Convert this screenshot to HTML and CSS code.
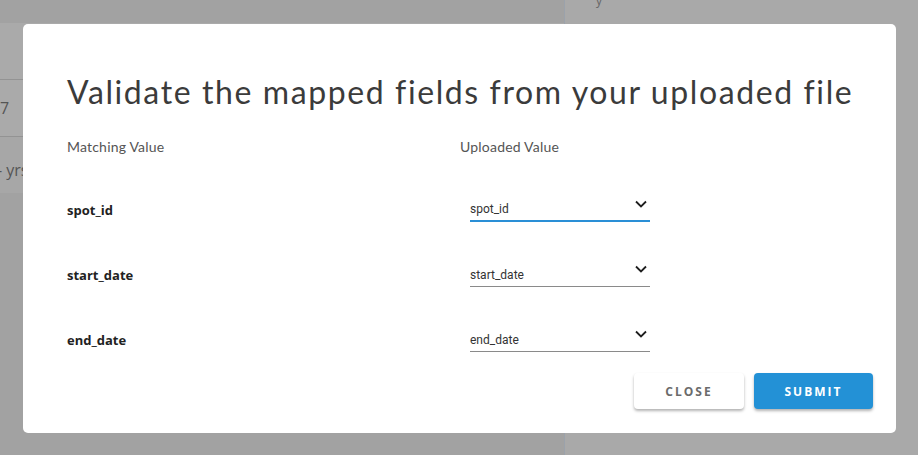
FILE: index.html
```html
<!DOCTYPE html>
<html lang="en">
<head>
    <meta charset="UTF-8">
    <meta name="viewport" content="width=device-width, initial-scale=1.0">
    <title>Field Mapping</title>
    <link rel="stylesheet" href="styles.css">
</head>
<body>
    <div class="page">
        <div class="main-panel">
            <div class="table-card">
                <div class="table-row head"></div>
                <div class="table-row"><span class="cell">7</span></div>
                <div class="table-row last"><span class="cell">- yrs</span></div>
            </div>
        </div>
        <div class="side-panel">
            <span class="side-text">y</span>
        </div>
    </div>

    <div class="overlay">
        <div class="modal">
            <h1>Validate the mapped fields from your uploaded file</h1>
            <div class="map-grid">
                <div class="col-label">Matching Value</div>
                <div class="col-label">Uploaded Value</div>

                <div class="field-name">spot_id</div>
                <div class="select active">
                    <span>spot_id</span>
                    <svg class="chevron" viewBox="0 0 12 8" width="12" height="8"><path d="M1 1.5 6 6.5 11 1.5" fill="none" stroke="#1e1e1e" stroke-width="1.8"/></svg>
                </div>

                <div class="field-name">start_date</div>
                <div class="select">
                    <span>start_date</span>
                    <svg class="chevron" viewBox="0 0 12 8" width="12" height="8"><path d="M1 1.5 6 6.5 11 1.5" fill="none" stroke="#1e1e1e" stroke-width="1.8"/></svg>
                </div>

                <div class="field-name">end_date</div>
                <div class="select">
                    <span>end_date</span>
                    <svg class="chevron" viewBox="0 0 12 8" width="12" height="8"><path d="M1 1.5 6 6.5 11 1.5" fill="none" stroke="#1e1e1e" stroke-width="1.8"/></svg>
                </div>
            </div>
            <div class="actions">
                <button class="btn btn-close">Close</button>
                <button class="btn btn-submit">Submit</button>
            </div>
        </div>
    </div>
</body>
</html>
```

FILE: styles.css
```css
* {
    box-sizing: border-box;
}

body {
    margin: 0;
    font-family: "Open Sans", Arial, sans-serif;
    background-color: #a3a3a3;
    height: 455px;
    overflow: hidden;
}

.page {
    display: flex;
    height: 100%;
}

.main-panel {
    width: 564px;
    padding-top: 23px;
    background-color: #a2a2a2;
}

.table-card {
    background-color: #aaaaaa;
}

.table-row {
    height: 57px;
    border-bottom: 1px solid #939393;
    color: #555;
    font-size: 16px;
    display: flex;
    align-items: center;
}

.table-row.last {
    border-bottom: none;
    height: 56px;
    padding-top: 10px;
    background-color: #a7a7a7;
}

.table-row.last .cell {
    margin-left: -3px;
}

.side-panel {
    flex: 1;
    background-color: #a9a9a9;
    border-left: 1px solid #9ba2ab;
    padding-left: 31px;
}

.side-text {
    color: #666;
    font-size: 12px;
    position: relative;
    top: -12px;
}

.overlay {
    position: absolute;
    inset: 0;
    padding: 24px 22px 22px 23px;
}

.modal {
    background-color: #fff;
    border-radius: 5px;
    height: 409px;
    padding: 46px 44px 24px 44px;
}

.modal h1 {
    margin: 0;
    font-family: Lato, sans-serif;
    font-weight: 400;
    font-size: 32px;
    line-height: 44px;
    color: #3b3b3b;
    letter-spacing: 1.6px;
    white-space: nowrap;
}

.map-grid {
    display: grid;
    grid-template-columns: 393px 190px;
    grid-template-rows: 36px repeat(3, 65px);
    margin-top: 14px;
}

.col-label {
    font-family: Lato, sans-serif;
    font-size: 14px;
    letter-spacing: 0.2px;
    color: #555;
    display: flex;
    align-items: center;
}

.field-name {
    font-weight: 700;
    font-size: 13px;
    color: #222;
    height: 32px;
    margin-top: 30px;
    display: flex;
    align-items: center;
}

.select {
    margin-left: 10px;
    position: relative;
    height: 32px;
    margin-top: 26px;
    padding-bottom: 4px;
    border-bottom: 1px solid #8a8a8a;
    display: flex;
    align-items: flex-end;
    font-family: Roboto, sans-serif;
    font-size: 12px;
    color: #333;
}

.select.active {
    border-bottom: 2px solid #2a8fd6;
}

.chevron {
    position: absolute;
    right: 3px;
    top: 10px;
}

.actions {
    margin-top: 14px;
    display: flex;
    justify-content: flex-end;
    gap: 10px;
    margin-right: -21px;
}

.btn {
    height: 36px;
    border: none;
    border-radius: 4px;
    font-family: "Open Sans", Arial, sans-serif;
    font-weight: 700;
    font-size: 12px;
    letter-spacing: 2px;
    text-transform: uppercase;
    cursor: pointer;
    box-shadow: 0 2px 3px rgba(0, 0, 0, 0.3);
}

.btn-close {
    width: 110px;
    background-color: #fff;
    color: #6b6b6b;
}

.btn-submit {
    width: 119px;
    background-color: #2391d6;
    color: #fff;
}
```
